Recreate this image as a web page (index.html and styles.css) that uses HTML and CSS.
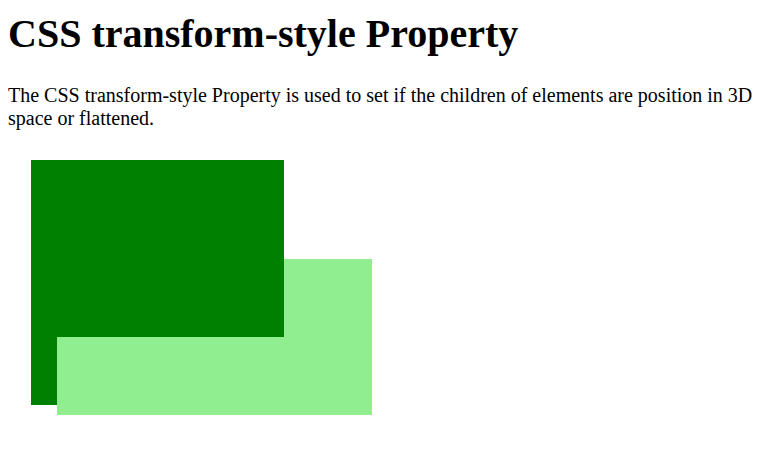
FILE: index.html
```
<!DOCTYPE html>
<html lang="en">
<head>
    <meta charset="UTF-8">
    <meta name="viewport" content="width=device-width, initial-scale=1.0">
    <title>CSS transform-style Property</title>
    <link rel="stylesheet" href="styles.css">
</head>
<body>
    <h1>CSS transform-style Property</h1>
    <p>The CSS transform-style Property is used to set if the children of elements are position in 3D space or flattened.</p>

    <!-- parent keeps its child in 3D, so the two planes cut through each other -->
    <div class="stage">
        <div class="parent">
            <div class="child"></div>
        </div>
    </div>
</body>
</html>
```
FILE: styles.css
```
body {
    font-family: 'Liberation Serif', 'Times New Roman', serif;
    margin: 8px;
}
h1 {
    font-size: 40px;
    margin: 2px 0 27px;
}
p {
    font-size: 20px;
    margin: 0 0 20px;
}
.stage {
    margin: 30px 0 0 23px;
    padding-bottom: 40px;
}
.parent {
    box-sizing: border-box;
    width: 253px;
    height: 245px;
    padding: 66px 0 0 26px;
    background-color: green;
    transform-style: preserve-3d;
    transform: rotateY(0deg);
}
.child {
    width: 315px;
    height: 222px;
    background-color: lightgreen;
    transform: rotateX(45deg);
}
```
